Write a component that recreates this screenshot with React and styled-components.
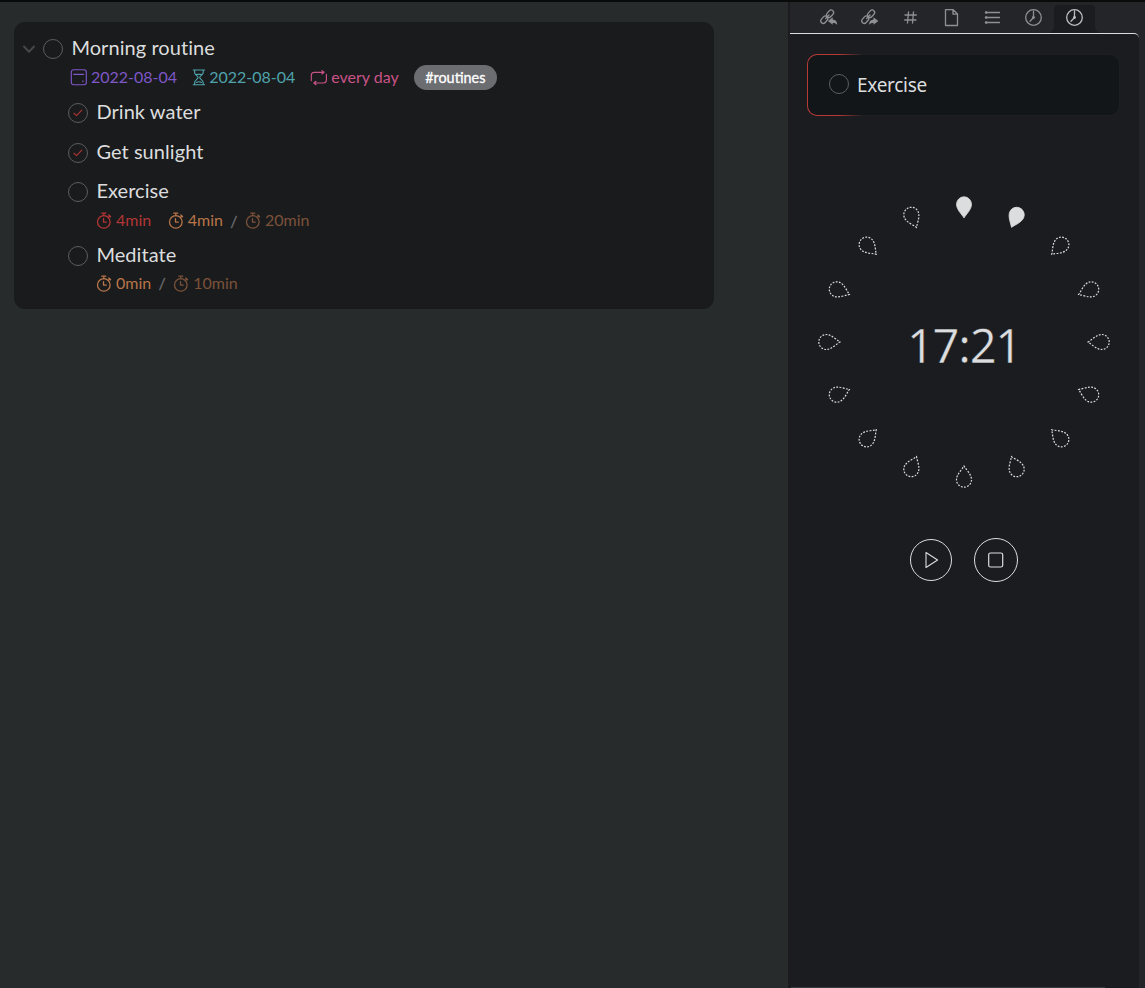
import React from "react";
import styled, { createGlobalStyle } from "styled-components";

const GlobalStyle = createGlobalStyle`
  * { box-sizing: border-box; }
  body { margin: 0; background: #272b2b; }
`;

const Workspace = styled.div`
  display: flex;
  width: 100%;
  height: 988px;
  border-top: 2px solid #090b0b;
  background: #242529;
  overflow: hidden;
`;

const NotePane = styled.main`
  flex: 0 0 788px;
  padding: 20px 14px;
  background: #272b2b;
  font-family: Lato, "Liberation Sans", sans-serif;
`;

const TaskCard = styled.section`
  width: 700px;
  height: 287px;
  padding: 11px 9px 0;
  border-radius: 11px;
  background: #1a1b1c;
`;

const TaskRow = styled.div`
  display: flex;
  align-items: center;
  height: ${(p) => p.$height}px;
  padding-left: ${(p) => (p.$nested ? 45 : 0)}px;
  margin-top: ${(p) => p.$gap || 0}px;
`;

const TaskTitle = styled.span`
  margin-left: 8.4px;
  padding-bottom: 4px;
  font-size: 20px;
  line-height: 24px;
  letter-spacing: 0.06px;
  color: #dcddde;
  white-space: nowrap;
`;

const MetaRow = styled.div`
  display: flex;
  align-items: center;
  height: ${(p) => p.$height}px;
  padding-left: ${(p) => p.$indent}px;
`;

const Meta = styled.span`
  display: flex;
  align-items: center;
  gap: 4px;
  margin-right: ${(p) => p.$after || 0}px;
  font-size: 16px;
  line-height: 20px;
  color: ${(p) => p.$color};
  white-space: nowrap;
  svg { flex: none; }
`;

const MetaText = styled.span`
  padding-bottom: 2px;
`;

const Slash = styled.span`
  width: 22px;
  padding-bottom: 1px;
  text-align: center;
  font-size: 16px;
  line-height: 20px;
  color: #6b6c6e;
  -webkit-text-stroke: 0.3px #6b6c6e;
`;

const Tag = styled.span`
  display: flex;
  align-items: center;
  justify-content: center;
  width: 83px;
  height: 25px;
  border-radius: 13px;
  background: #6c6d71;
  color: #fff;
  font-size: 14.4px;
  -webkit-text-stroke: 0.3px #fff;
`;

const Check = styled.span`
  display: grid;
  place-items: center;
  flex: none;
  width: 20px;
  height: 20px;
  border: 1px solid #5c5d60;
  border-radius: 50%;
`;

const Sidebar = styled.aside`
  display: flex;
  flex-direction: column;
  width: 351px;
  border-left: 2px solid #1b1c1f;
`;

const TabBar = styled.nav`
  display: flex;
  align-items: flex-end;
  flex: 0 0 31px;
  padding-left: 18px;
  background: #242529;
`;

const Tab = styled.button`
  position: relative;
  display: grid;
  place-items: center;
  width: 41px;
  height: 28px;
  padding: 0 0 3px;
  border: 0;
  border-radius: 4px 4px 0 0;
  background: ${(p) => (p.$active ? "#1b1c1f" : "transparent")};
  color: ${(p) => (p.$active ? "#bcbdbf" : "#8f9093")};
  ${(p) =>
    p.$active &&
    `&::before, &::after {
      content: "";
      position: absolute;
      bottom: 0;
      width: 6px;
      height: 6px;
    }
    &::before { right: 100%; background: radial-gradient(circle at 0 0, transparent 5.5px, #1b1c1f 6px); }
    &::after { left: 100%; background: radial-gradient(circle at 100% 0, transparent 5.5px, #1b1c1f 6px); }`}
`;

const TimerPane = styled.div`
  display: flex;
  flex-direction: column;
  align-items: center;
  flex: 1;
  padding-top: 20px;
  border-top: 1px solid #dcddde;
  border-top-right-radius: 5px;
  background: #1b1c1f;
`;

const CurrentTask = styled.div`
  display: flex;
  align-items: center;
  align-self: flex-start;
  width: 313px;
  height: 62px;
  margin-left: 17px;
  padding: 0 0 2px 21px;
  border: 1.5px solid transparent;
  border-radius: 10px;
  background:
    linear-gradient(#121619, #121619) padding-box,
    linear-gradient(90deg, #b83a37 0, #b83a37 10%, #1d1f22 18%) border-box;
`;

const CurrentTitle = styled.span`
  margin-left: 8px;
  font: 400 19px/26px "Noto Sans", sans-serif;
  letter-spacing: -0.3px;
  padding-top: 2px;
  color: #dcddde;
`;

const Dial = styled.div`
  display: grid;
  place-items: center;
  width: 300px;
  height: 300px;
  margin: 76px 0 0 -1px;
  > * { grid-area: 1 / 1; }
`;

const Clock = styled.div`
  font: 400 47px/60px "Noto Sans", sans-serif;
  letter-spacing: -1.2px;
  padding-top: 5px;
  color: #dcddde;
  -webkit-text-stroke: 0.5px #1b1c1f;
`;

const Controls = styled.div`
  display: flex;
  align-items: center;
  gap: 22px;
  margin-top: 46px;
  margin-left: -1.5px;
`;

const RoundButton = styled.button`
  display: grid;
  place-items: center;
  width: ${(p) => p.$size}px;
  height: ${(p) => p.$size}px;
  padding: 0;
  border: 1px solid #dcddde;
  border-radius: 50%;
  background: transparent;
  color: #dcddde;
`;

const BottomLine = styled.div`
  width: 314px;
  height: 1px;
  margin: auto auto 0 1px;
  background: #3b3c3f;
`;

const Icon = ({ w = 18, h = 18, sw = 1.2, box, children }) => (
  <svg
    width={w}
    height={h}
    viewBox={box || `0 0 ${w} ${h}`}
    fill="none"
    stroke="currentColor"
    strokeWidth={sw}
    strokeLinecap="round"
    strokeLinejoin="round"
    overflow="visible"
  >
    {children}
  </svg>
);

const TabIcon = ({ children }) => (
  <Icon w={17} h={17} sw={1.3} box="0.5 0.5 17 17">
    {children}
  </Icon>
);

const Chevron = () => (
  <Icon w={12} h={8} sw={2}>
    <path d="M1 1.5 6 6.7l5-5.2" stroke="#46474a" />
  </Icon>
);

const CalendarIcon = () => (
  <Icon w={17} h={17} sw={1.15}>
    <rect x="1.3" y="0.7" width="15" height="15" rx="2.2" />
    <path d="M3.7 5.3h10M12.9 11.7v1" />
  </Icon>
);

const HourglassIcon = () => (
  <Icon w={13} h={17} sw={1.15}>
    <path d="M1.2 1h11.4M1.2 15.7h11.4M2.6 1v2.5c0 2.4 3.5 3.6 3.5 5s-3.5 2.600-3.500 5V15.700M11.200 1v2.500c0 2.400-3.500 3.600-3.500 5s3.500 2.600 3.500 5V15.700M4.600 5.300h4.600M4.400 13.500c1.200-1 3.800-1 5 0" />
  </Icon>
);

const RepeatIcon = () => (
  <Icon w={17} h={16} sw={1.15}>
    <path d="M1.300 8.500V5.300a3 3 0 0 1 3-3h9.500M11.900.6l2.200 1.700-2.200 1.700M16.400 4.200v5.800a3 3 0 0 1-3 3H4M6 11.300l-2.200 1.700 2.200 1.700M1.300 8.500v2.200" />
  </Icon>
);

const StopwatchIcon = () => (
  <Icon w={16} h={18} sw={1.3}>
    <circle cx="7.800" cy="9.900" r="6.300" />
    <path d="M5.800 1.200h4M7.800 1.200v2.500M12.600 5.200l1.300-1.400M12.800 3l1.800 1.700M7.500 6.600v3.500h2.800" />
  </Icon>
);

const TickIcon = () => (
  <Icon w={10} h={8} sw={1.2}>
    <path d="M1 4.300 3.500 6.600 8.800 1.200" stroke="#a93533" />
  </Icon>
);

const LinkIcon = ({ outgoing }) => (
  <TabIcon>
    <rect x="-2.500" y="-4" width="5" height="8" rx="2.500" transform="translate(10.600 5.200) rotate(42)" />
    <rect x="-2.500" y="-4" width="5" height="8" rx="2.500" transform="translate(4.800 11.200) rotate(42)" />
    <path d="M6.200 10 9.500 6.500" />
    <path
      d={
        outgoing
          ? "M17.800 12.400 13 8.700v2.200c-3 .2-4.500 2-4.500 5.500 1.200-1.700 2.500-2.100 4.500-2v1.900z"
          : "M8.400 12.400 13.200 8.700v2.200c3 .2 4.500 2.200 4.500 5.500-1.200-1.700-2.500-2.100-4.500-2v1.900z"
      }
      fill="currentColor"
      stroke="none"
    />
  </TabIcon>
);

const HashIcon = () => (
  <TabIcon>
    <path d="M7 3.500 6 14.500M12 3.500l-1 11M3.500 6.500h11.300M3.200 11.500h11.300" />
  </TabIcon>
);

const FileIcon = () => (
  <TabIcon>
    <path d="M3 1.200h7.700l4.300 4.300V17H3zM10.500 1.500v4.200h4.300" />
  </TabIcon>
);

const ListIcon = () => (
  <TabIcon>
    <path d="M6 4h10M6 9h10M6 14h10M2.500 9H6M2.500 4H6M2.500 14H6" />
    <path d="M2.500 4h.3M2.500 9h.3M2.500 14h.3" strokeWidth="2.500" />
  </TabIcon>
);

const ClockIcon = () => (
  <TabIcon>
    <circle cx="9" cy="9" r="7.800" />
    <path d="M9 2.500V9l-3.500 3.700" />
    <circle cx="9" cy="9" r=".8" fill="currentColor" />
  </TabIcon>
);

const TABS = [
  { name: "Backlinks", icon: <LinkIcon /> },
  { name: "Outgoing links", icon: <LinkIcon outgoing /> },
  { name: "Tags", icon: <HashIcon /> },
  { name: "Files", icon: <FileIcon /> },
  { name: "Outline", icon: <ListIcon /> },
  { name: "History", icon: <ClockIcon /> },
  { name: "Timer", icon: <ClockIcon />, active: true },
];

const DROP = "M0 10.600C-2 7.200-7.500 2.200-7.500-3a7.500 7.500 0 0 1 15 0C7.500 2.200 2 7.200 0 10.600z";

const Drops = ({ elapsed }) => (
  <svg width="300" height="300" viewBox="-150 -150 300 300" stroke="#dcddde">
    {Array.from({ length: 16 }, (_, i) => (
      <path
        key={i}
        d={DROP}
        transform={`rotate(${i * 22.5}) translate(0 -134.7)`}
        fill={i < elapsed ? "#dcddde" : "none"}
        strokeWidth={i < elapsed ? 0.8 : 1.2}
        strokeDasharray={i < elapsed ? undefined : "1.8 1.4"}
      />
    ))}
  </svg>
);

const Checkbox = ({ done }) => <Check>{done && <TickIcon />}</Check>;

const Duration = ({ color, after, children }) => (
  <Meta $color={color} $after={after}>
    <StopwatchIcon />
    <MetaText>{children}</MetaText>
  </Meta>
);

export default function App() {
  return (
    <>
      <GlobalStyle />
      <Workspace>
        <NotePane>
          <TaskCard>
            <TaskRow $height={31}>
              <Meta $after={8} $color="#46474a"><Chevron /></Meta>
              <Checkbox />
              <TaskTitle>Morning routine</TaskTitle>
            </TaskRow>
            <MetaRow $height={27} $indent={47}>
              <Meta $color="#7e57c8" $after={15}><CalendarIcon /><MetaText>2022-08-04</MetaText></Meta>
              <Meta $color="#4fa3ac" $after={15}><HourglassIcon /><MetaText>2022-08-04</MetaText></Meta>
              <Meta $color="#c95388" $after={15}><RepeatIcon /><MetaText>every day</MetaText></Meta>
              <Tag>#routines</Tag>
            </MetaRow>
            <TaskRow $height={40} $gap={2} $nested>
              <Checkbox done />
              <TaskTitle>Drink water</TaskTitle>
            </TaskRow>
            <TaskRow $height={40} $nested>
              <Checkbox done />
              <TaskTitle>Get sunlight</TaskTitle>
            </TaskRow>
            <TaskRow $height={36} $gap={1} $nested>
              <Checkbox />
              <TaskTitle>Exercise</TaskTitle>
            </TaskRow>
            <MetaRow $height={22} $indent={73}>
              <Duration color="#b33636" after={16.5}>4min</Duration>
              <Duration color="#b8754a">4min</Duration>
              <Slash>/</Slash>
              <Duration color="#7c523b">20min</Duration>
            </MetaRow>
            <TaskRow $height={36} $gap={6} $nested>
              <Checkbox />
              <TaskTitle>Meditate</TaskTitle>
            </TaskRow>
            <MetaRow $height={19} $indent={73}>
              <Duration color="#b8754a">0min</Duration>
              <Slash>/</Slash>
              <Duration color="#7c523b">10min</Duration>
            </MetaRow>
          </TaskCard>
        </NotePane>
        <Sidebar>
          <TabBar>
            {TABS.map((tab) => (
              <Tab key={tab.name} $active={tab.active} aria-label={tab.name}>
                {tab.icon}
              </Tab>
            ))}
          </TabBar>
          <TimerPane>
            <CurrentTask>
              <Checkbox />
              <CurrentTitle>Exercise</CurrentTitle>
            </CurrentTask>
            <Dial>
              <Drops elapsed={2} />
              <Clock>17:21</Clock>
            </Dial>
            <Controls>
              <RoundButton $size={42} aria-label="Start">
                <Icon sw={1.1}><path d="M4 1.500v15L15.600 9z" /></Icon>
              </RoundButton>
              <RoundButton $size={44} aria-label="Stop">
                <Icon sw={1.2}><rect x="1.700" y="2" width="14" height="14" rx="1.800" /></Icon>
              </RoundButton>
            </Controls>
            <BottomLine />
          </TimerPane>
        </Sidebar>
      </Workspace>
    </>
  );
}
